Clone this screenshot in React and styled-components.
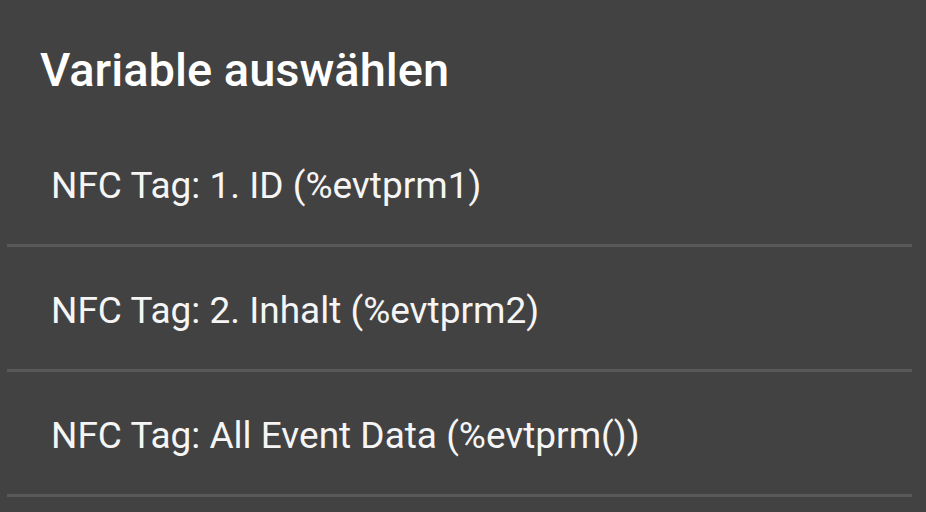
import React from "react";
import styled, { createGlobalStyle } from "styled-components";

const GlobalStyle = createGlobalStyle`
  html, body {
    margin: 0;
    padding: 0;
    background: #424242;
  }
  body {
    font-family: Roboto, "Noto Sans", sans-serif;
  }
`;

const Dialog = styled.div`
  width: 926px;
  height: 512px;
  background: #424242;
  overflow: hidden;
`;

const Title = styled.h1`
  margin: 0;
  padding: 42px 0 0 40px;
  height: 122px;
  box-sizing: border-box;
  font-size: 47px;
  font-weight: 500;
  line-height: 56px;
  color: #ffffff;
`;

const List = styled.ul`
  list-style: none;
  margin: 0;
  padding: 0 14px 0 7px;
`;

const Item = styled.li`
  height: 125px;
  box-sizing: border-box;
  padding: 42px 0 0 44px;
  border-bottom: 3px solid #595959;
  font-size: 37px;
  line-height: 44px;
  color: #f5f5f5;
`;

const items = [
  "NFC Tag: 1. ID (%evtprm1)",
  "NFC Tag: 2. Inhalt (%evtprm2)",
  "NFC Tag: All Event Data (%evtprm())",
];

export default function App() {
  return (
    <Dialog>
      <GlobalStyle />
      <Title>Variable auswählen</Title>
      <List>
        {items.map((t) => (
          <Item key={t}>{t}</Item>
        ))}
      </List>
    </Dialog>
  );
}
